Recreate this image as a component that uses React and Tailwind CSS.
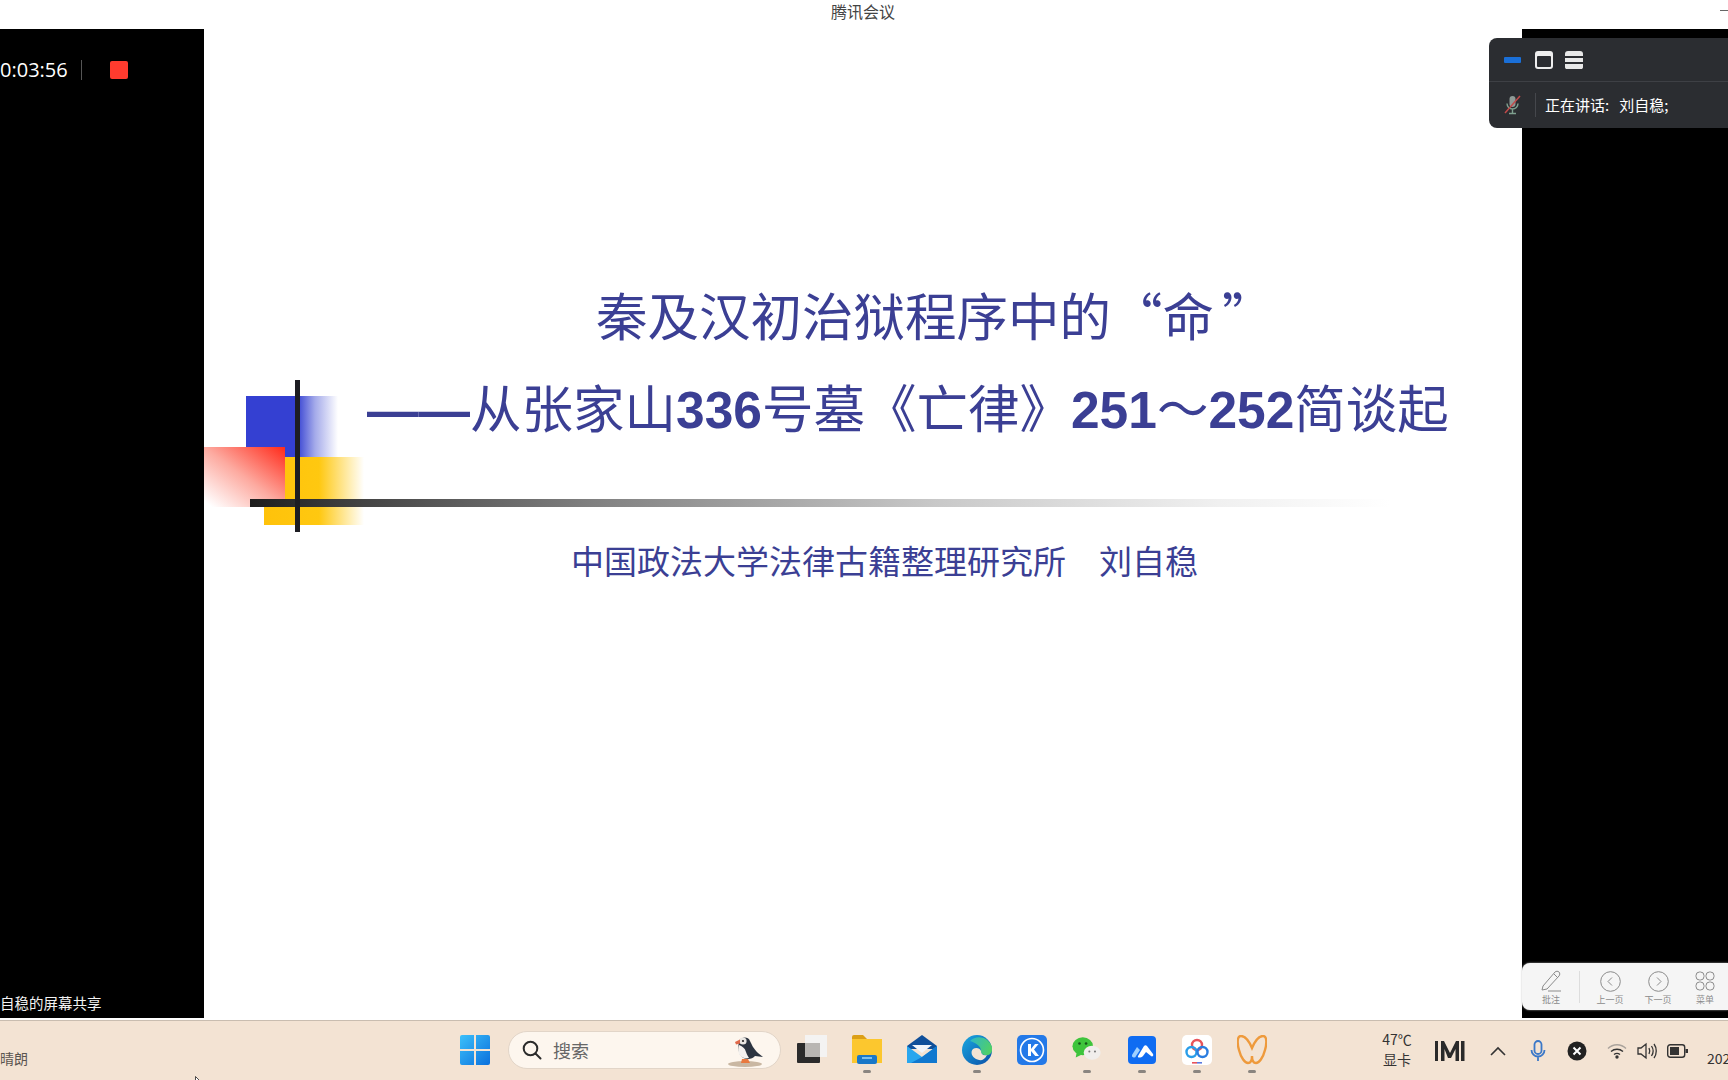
import React from "react";

const cjk = '"Noto Sans CJK SC", "Noto Sans", sans-serif';
const latin = { fontFamily: '"Liberation Sans", sans-serif' };

// slide decoration (coordinates are relative to the slide's left edge, y offset 351)
const SlideArt = () => (
  <svg className="absolute left-0 top-[351px]" width="1318" height="160" viewBox="0 0 1318 160">
    <defs>
      <linearGradient id="blue" x1="0" x2="1" y1="0" y2="0">
        <stop offset="0" stopColor="#3440d2" />
        <stop offset="0.55" stopColor="#3440d2" />
        <stop offset="0.75" stopColor="#a4aaea" />
        <stop offset="1" stopColor="#ffffff" />
      </linearGradient>
      <linearGradient id="yellow" x1="0" x2="1" y1="0" y2="0">
        <stop offset="0" stopColor="#ffc20a" />
        <stop offset="0.55" stopColor="#ffc810" />
        <stop offset="1" stopColor="#ffffff" />
      </linearGradient>
      <linearGradient id="red" x1="0" x2="1" y1="1" y2="0">
        <stop offset="0.05" stopColor="#ffffff" />
        <stop offset="0.5" stopColor="#fdaaa0" />
        <stop offset="1" stopColor="#ff2a1a" />
      </linearGradient>
      <linearGradient id="rule" x1="0" x2="1" y1="0" y2="0">
        <stop offset="0" stopColor="#1d1d1d" />
        <stop offset="0.1" stopColor="#444444" />
        <stop offset="0.3" stopColor="#808080" />
        <stop offset="0.6" stopColor="#c8c8c8" />
        <stop offset="0.85" stopColor="#f0f0f0" />
        <stop offset="1" stopColor="#ffffff" />
      </linearGradient>
    </defs>
    <rect x="42" y="16" width="92" height="61" fill="url(#blue)" />
    <rect x="60" y="77" width="100" height="68" fill="url(#yellow)" />
    <rect x="0" y="67" width="81" height="60" fill="url(#red)" />
    <rect x="46" y="119" width="1140" height="8" fill="url(#rule)" />
    <rect x="91" y="0" width="5" height="152" fill="#1d1d22" />
  </svg>
);

const WinIcon = () => (
  <svg className="mb-[2px] shrink-0" width="30" height="30" viewBox="0 0 30 30">
    <defs>
      <linearGradient id="win" x1="0" y1="0" x2="1" y2="1">
        <stop offset="0" stopColor="#3cc0fa" />
        <stop offset="1" stopColor="#0a70dc" />
      </linearGradient>
    </defs>
    <path d="M2 0h12v14H0V2a2 2 0 0 1 2-2zM16 0h12a2 2 0 0 1 2 2v12H16zM0 16h14v14H2a2 2 0 0 1-2-2zM16 16h14v12a2 2 0 0 1-2 2H16z" fill="url(#win)" />
  </svg>
);

const Puffin = () => (
  <svg width="38" height="32" viewBox="0 0 38 32">
    <ellipse cx="17" cy="29" rx="17" ry="3" fill="#c9b7a2" />
    <path d="M11 6c2-4 9-5 11 0 2 4 3 7 8 12l5 4-8-1c-3 4-11 4-14 0-3-4-3-9-2-15z" fill="#2c3440" />
    <path d="M11 10c3 1 6 3 7 7 1 3 2 4 3 6-4 1-8 0-10-4-1-3-1-6 0-9z" fill="#f4f1ee" />
    <circle cx="15" cy="6" r="3.6" fill="#e9e6e2" />
    <circle cx="15" cy="6" r="1.1" fill="#222222" />
    <path d="M12 4.500 7 7l1 2.500 4-1z" fill="#e0694a" />
    <path d="M14 24h6l2 4h-9z" fill="#e8793f" />
  </svg>
);

const TaskView = () => (
  <svg width="30" height="30" viewBox="0 0 30 30">
    <rect x="8" y="0" width="22" height="22" fill="#f4f3f2" />
    <rect x="0" y="8" width="23" height="20" rx="1" fill="#2b2b2b" />
    <rect x="8" y="8" width="15" height="14" fill="#b9b6b3" />
  </svg>
);

const Folder = () => (
  <svg width="30" height="30" viewBox="0 0 30 30">
    <path d="M0 2a2 2 0 0 1 2-2h9l4 4h15v4H0z" fill="#dc9f16" />
    <rect x="0" y="4" width="30" height="24" fill="#fcc72e" />
    <rect x="5" y="20" width="20" height="9" rx="2" fill="#1a78c8" />
    <rect x="10" y="22" width="10" height="2" fill="#7cc0ee" />
  </svg>
);

const Mail = () => (
  <svg width="30" height="30" viewBox="0 0 30 30">
    <path d="M0 11 15 0l15 11v3H0z" fill="#0f4f9a" />
    <path d="M5 10h20l-10 8z" fill="#f1f5fa" />
    <path d="M0 11l15 11 15-11v17H0z" fill="#29a6ee" />
    <path d="M15 22l15-11v17H4z" fill="#1078cf" />
  </svg>
);

const Edge = () => (
  <svg width="30" height="30" viewBox="0 0 30 30">
    <defs>
      <linearGradient id="edge" x1="0" y1="0" x2="1" y2="1">
        <stop offset="0" stopColor="#1aa8e0" />
        <stop offset="1" stopColor="#0b4fa8" />
      </linearGradient>
      <linearGradient id="edge2" x1="0" y1="0" x2="1" y2="0.4">
        <stop offset="0" stopColor="#2fb6c8" />
        <stop offset="1" stopColor="#4fcf6a" />
      </linearGradient>
    </defs>
    <circle cx="15" cy="15" r="15" fill="url(#edge)" />
    <path d="M8 6c6-6 18-5 22 6 1 4-1 9-6 8-4 0-5-2-5-4 0-5-5-8-11-10z" fill="url(#edge2)" />
    <path d="M14 24c-4-2-6-7-3-10 3-2 7-1 8 2 0 3 2 5 6 4-3 6-7 6-11 4z" fill="#f3e3d3" />
  </svg>
);

const Kugou = () => (
  <svg width="30" height="30" viewBox="0 0 30 30">
    <rect width="30" height="30" rx="5" fill="#2379e8" />
    <circle cx="15" cy="15" r="11.500" fill="none" stroke="#ffffff" strokeWidth="1.600" />
    <path d="M11 9h3v5l4-5h3.600l-4.600 5.600 5 6.400h-3.800L14 16v5h-3z" fill="#ffffff" />
  </svg>
);

const WeChat = () => (
  <svg width="32" height="30" viewBox="0 0 32 30">
    <ellipse cx="11.500" cy="11" rx="11" ry="9.500" fill="#3ec43c" />
    <path d="M5 17l-1 6 6-3z" fill="#3ec43c" />
    <circle cx="8" cy="8" r="1.400" fill="#15551a" />
    <circle cx="15" cy="8" r="1.400" fill="#15551a" />
    <ellipse cx="21.500" cy="18" rx="9" ry="7.500" fill="#f1eeec" />
    <circle cx="18.500" cy="16.500" r="1.100" fill="#777777" />
    <circle cx="24.500" cy="16.500" r="1.100" fill="#777777" />
  </svg>
);

const Lark = () => (
  <svg width="28" height="28" viewBox="0 0 28 28">
    <rect width="28" height="28" rx="4" fill="#0f6cf2" />
    <path d="M4 19l5-8 3 3-4 6a2 2 0 0 1-4-1z" fill="#9fd0ff" />
    <path d="M10 20l6-10c1-1 2-1 3 0l6 8c1 2-1 3-2 2l-5-4-3 4c-2 2-6 2-5 0z" fill="#ffffff" />
  </svg>
);

const BaiduPan = () => (
  <svg width="30" height="30" viewBox="0 0 30 30">
    <rect width="30" height="30" rx="5" fill="#ffffff" />
    <circle cx="15" cy="10" r="5" fill="none" stroke="#e8545a" strokeWidth="2.400" />
    <circle cx="9.500" cy="17" r="5" fill="none" stroke="#2a9de8" strokeWidth="2.400" />
    <circle cx="20.500" cy="17" r="5" fill="none" stroke="#2a7de0" strokeWidth="2.400" />
    <rect x="10" y="27" width="5" height="1.600" fill="#e8545a" />
    <rect x="15" y="27" width="5" height="1.600" fill="#5a7ae0" />
  </svg>
);

const Butterfly = () => (
  <svg width="30" height="30" viewBox="0 0 30 30">
    <path d="M15 13C12 6 8 1 4 1 0 1 0 8 2 15c2 8 6 13 9 13 3 0 4-3 4-7 0 4 1 7 4 7 3 0 7-5 9-13 2-7 2-14-2-14-4 0-8 5-11 12z" fill="none" stroke="#ee9a3c" strokeWidth="2.400" />
  </svg>
);

const Dot = ({ on }) => (
  <span className={`mt-[5px] h-[3px] w-[8px] rounded-full ${on ? "bg-[#8a8580]" : "bg-transparent"}`} />
);

const TaskIcon = ({ on, children }) => (
  <div className="flex h-[50px] w-[55px] shrink-0 flex-col items-center justify-end">
    <div className="flex h-[30px] w-[30px] items-center justify-center">{children}</div>
    <Dot on={on} />
  </div>
);

// bottom right toolbar item
const ToolItem = ({ label, children, cls }) => (
  <div className={`flex flex-col items-center text-[#8b8b8b] ${cls}`}>
    <div className="flex h-[24px] items-center">{children}</div>
    <span className="mt-[2px] text-[9px] leading-[12px]">{label}</span>
  </div>
);

export default function App() {
  return (
    <div className="relative flex h-[1080px] w-[1728px] flex-col overflow-hidden bg-white" style={{ fontFamily: cjk }}>
      {/* 标题栏 */}
      <div className="flex h-[29px] items-start bg-white">
        <span className="ml-[831px] text-[16px] leading-[22px] text-[#444444]">腾讯会议</span>
        <span className="ml-auto mt-[10px] h-[1px] w-[8px] bg-[#666666]" />
      </div>

      {/* 共享区 */}
      <div className="flex h-[989px]">
        <div className="flex w-[204px] flex-col justify-between bg-black text-white">
          <div className="mt-[26px] flex h-[30px] items-center">
            <span className="text-[20px] leading-[30px]" style={{ fontFamily: '"Open Sans", sans-serif' }}>0:03:56</span>
            <span className="ml-[13px] h-[20px] w-[1px] bg-[#555555]" />
            <span className="ml-[28px] h-[18px] w-[18px] rounded-[2px] bg-[#ff3b2e]" />
          </div>
          <span className="mb-[5px] text-[14.5px] leading-[20px] text-[#f2f2f2]">自稳的屏幕共享</span>
        </div>

        <div className="relative flex w-[1318px] flex-col bg-white text-[#3b3f94]">
          <SlideArt />
          <div className="relative pl-[392px] pt-[255px] text-[51.5px] leading-[60px] whitespace-nowrap">
            秦及汉初治狱程序中的“命<span className="ml-[8px]">”</span>
          </div>
          <div className="relative mt-[32px] pl-[163px] text-[51.5px] leading-[60px] whitespace-nowrap">
            <span className="font-bold" style={latin}>——</span>
            从张家山
            <span className="font-bold" style={latin}>336</span>
            号墓《亡律》
            <span className="font-bold" style={latin}>251</span>
            ～
            <span className="font-bold" style={latin}>252</span>
            简谈起
          </div>
          <div className="relative mt-[100px] pl-[367px] text-[33px] leading-[40px] whitespace-nowrap">
            中国政法大学法律古籍整理研究所　刘自稳
          </div>
        </div>

        <div className="flex-1 bg-black" />
      </div>

      {/* 白边 */}
      <div className="h-[2px] bg-white" />

      {/* 任务栏 */}
      <div className="flex h-[60px] items-center border-t border-[#c9bdb0] bg-[#f3e3d3] text-[#444444]">
        <span className="mt-[15px] w-[460px] shrink-0 text-[14px] leading-[20px] text-[#5a5550]">晴朗</span>
        <WinIcon />
        <div className="mb-[2px] ml-[18px] flex h-[38px] w-[273px] shrink-0 items-center rounded-full border border-[#e2d5c8] bg-[#fdf6ee] pl-[13px] pr-[14px]">
          <svg width="20" height="20" viewBox="0 0 20 20" fill="none" stroke="#2b2b2b" strokeWidth="2">
            <circle cx="8.500" cy="8.500" r="6.800" />
            <path d="M13.500 13.500 18.500 18.500" strokeLinecap="round" />
          </svg>
          <span className="ml-[11px] text-[18px] leading-[24px] text-[#666666]">搜索</span>
          <span className="ml-auto mt-[2px]"><Puffin /></span>
        </div>
        <div className="ml-[3px] flex shrink-0 pb-[5px]">
          <TaskIcon><TaskView /></TaskIcon>
          <TaskIcon on><Folder /></TaskIcon>
          <TaskIcon><Mail /></TaskIcon>
          <TaskIcon on><Edge /></TaskIcon>
          <TaskIcon><Kugou /></TaskIcon>
          <TaskIcon on><WeChat /></TaskIcon>
          <TaskIcon on><Lark /></TaskIcon>
          <TaskIcon on><BaiduPan /></TaskIcon>
          <TaskIcon on><Butterfly /></TaskIcon>
        </div>
        <div className="mb-[3px] ml-[100px] flex w-[36px] shrink-0 flex-col items-center text-[14px] leading-[20px] text-[#333333]">
          <span>47℃</span>
          <span>显卡</span>
        </div>
        <svg className="ml-[20px] shrink-0" width="30" height="22" viewBox="0 0 30 22" fill="#2a2a2a">
          <path d="M0 1h3v20H0zM6 1h3l6 12 6-12h3v20h-3.500V9l-4.500 9h-3L9.500 9v12H6zM26 1h3.500v20H26z" />
        </svg>
        <svg className="ml-[25px] shrink-0" width="16" height="10" viewBox="0 0 16 10" fill="none" stroke="#333333" strokeWidth="1.600">
          <path d="M1 9 8 2l7 7" />
        </svg>
        <svg className="ml-[24px] shrink-0" width="16" height="22" viewBox="0 0 16 22" fill="none" stroke="#3b78c8" strokeWidth="1.800">
          <rect x="4.500" y="1" width="7" height="13" rx="3.500" />
          <path d="M1.500 10a6.500 6.500 0 0 0 13 0M8 17v4" />
        </svg>
        <svg className="ml-[21px] shrink-0" width="20" height="20" viewBox="0 0 20 20">
          <circle cx="10" cy="10" r="9.500" fill="#222222" />
          <path d="M6.500 6.500l7 7M13.500 6.500l-7 7" stroke="#ffffff" strokeWidth="2" />
        </svg>
        <svg className="ml-[20px] shrink-0" width="20" height="16" viewBox="0 0 20 16" fill="none" stroke="#333333" strokeWidth="1.400">
          <path d="M1 5.500c5-5 13-5 18 0" stroke="#aaa39c" />
          <path d="M4 8.500c3.500-3 8.500-3 12 0M7 11.500c2-1.500 4-1.500 6 0" />
          <circle cx="10" cy="14" r="1" fill="#333333" />
        </svg>
        <svg className="ml-[10px] shrink-0" width="20" height="18" viewBox="0 0 20 18" fill="none" stroke="#333333" strokeWidth="1.300">
          <path d="M1 6h3l5-4v14l-5-4H1zM12 6c1 2 1 4 0 6M14.500 4c2 3 2 7 0 10M17 2c3 4 3 10 0 14" />
        </svg>
        <svg className="ml-[10px] shrink-0" width="21" height="14" viewBox="0 0 21 14">
          <rect x="0.700" y="0.700" width="17" height="12.600" rx="2.500" fill="none" stroke="#333333" strokeWidth="1.400" />
          <rect x="3" y="3" width="9" height="8" fill="#333333" />
          <rect x="18.500" y="5" width="2.500" height="4" fill="#333333" />
        </svg>
        <span className="ml-[19px] mt-[15px] shrink-0 text-[14px] leading-[20px] whitespace-nowrap text-[#333333]">202</span>
      </div>

      {/* 鼠标 */}
      <svg className="absolute left-[195px] top-[1076px]" width="8" height="10" viewBox="0 0 8 10">
        <path d="M0.500 0.500v8l2-2 1.500 3 1-.5-1.400-3H6z" fill="#ffffff" stroke="#222222" strokeWidth="0.800" />
      </svg>

      {/* 会议浮窗 */}
      <div className="absolute left-[1489px] top-[38px] flex h-[90px] w-[260px] flex-col rounded-lg bg-[#2b2d31]">
        <div className="flex h-[44px] items-center border-b border-[#3e4045] pl-[15px]">
          <span className="h-[6px] w-[17px] rounded-[1px] bg-[#1a6fd8]" />
          <svg className="ml-[14px]" width="18" height="18" viewBox="0 0 18 18">
            <path d="M3 0h12a3 3 0 0 1 3 3v12a3 3 0 0 1-3 3H3a3 3 0 0 1-3-3V3a3 3 0 0 1 3-3z" fill="#eeeeee" />
            <rect x="2" y="5" width="14" height="11" rx="1" fill="#2b2d31" />
          </svg>
          <svg className="ml-[12px]" width="18" height="18" viewBox="0 0 18 18" fill="#e8e8e8">
            <path d="M3 0h12a3 3 0 0 1 3 3v2H0V3a3 3 0 0 1 3-3z" />
            <rect x="0" y="7" width="18" height="4" />
            <path d="M0 13h18v2a3 3 0 0 1-1 3H1a3 3 0 0 1-1-3z" />
          </svg>
        </div>
        <div className="flex flex-1 items-center pl-[15px]">
          <svg width="17" height="20" viewBox="0 0 17 20" fill="none">
            <rect x="5.500" y="1" width="6" height="11" rx="3" fill="#8f9a96" />
            <path d="M3 8.500a5.500 5.500 0 0 0 11 0M8.500 14v4M5 18.500h7" stroke="#7fa08f" strokeWidth="1.400" />
            <path d="M1 18 16 1" stroke="#c24a4a" strokeWidth="1.500" />
          </svg>
          <span className="ml-[14px] h-[24px] w-[1px] bg-[#45474c]" />
          <span className="ml-[9px] text-[15px] leading-[20px] whitespace-nowrap text-white">正在讲话:</span>
          <span className="ml-[10px] text-[15px] leading-[20px] whitespace-nowrap text-white">刘自稳;</span>
        </div>
      </div>

      {/* 批注工具条 */}
      <div className="absolute left-[1522px] top-[963px] flex h-[47px] w-[206px] items-center rounded-l-lg bg-[#f5f5f5] shadow-[0_0_2px_#bbbbbb]">
        <ToolItem label="批注" cls="ml-[19px] w-[20px]">
          <svg className="mt-[3px]" width="22" height="22" viewBox="0 0 22 22" fill="none" stroke="#8b8b8b" strokeWidth="1">
            <path d="M3 16 15 2c1-1 3-1 4 0s1 3 0 4L7 19l-5 1zM14 4l4 4M8 21h13" />
          </svg>
        </ToolItem>
        <span className="ml-[18px] h-[32px] w-[1px] bg-[#dddddd]" />
        <ToolItem label="上一页" cls="ml-[16px] w-[28px]">
          <svg className="mt-[3px]" width="21" height="21" viewBox="0 0 21 21" fill="none" stroke="#8b8b8b" strokeWidth="1">
            <circle cx="10.500" cy="10.500" r="9.800" />
            <path d="M12 6.500l-4 4 4 4" />
          </svg>
        </ToolItem>
        <ToolItem label="下一页" cls="ml-[20px] w-[28px]">
          <svg className="mt-[3px]" width="21" height="21" viewBox="0 0 21 21" fill="none" stroke="#8b8b8b" strokeWidth="1">
            <circle cx="10.500" cy="10.500" r="9.800" />
            <path d="M9 6.500l4 4-4 4" />
          </svg>
        </ToolItem>
        <ToolItem label="菜单" cls="ml-[23px] w-[20px]">
          <svg className="mt-[3px]" width="20" height="20" viewBox="0 0 20 20" fill="none" stroke="#8b8b8b" strokeWidth="1">
            <rect x="1" y="1" width="8" height="8" rx="3.500" />
            <rect x="11" y="1" width="8" height="8" rx="3.500" />
            <rect x="1" y="11" width="8" height="8" rx="3.500" />
            <rect x="11" y="11" width="8" height="8" rx="3.500" />
          </svg>
        </ToolItem>
      </div>
    </div>
  );
}
